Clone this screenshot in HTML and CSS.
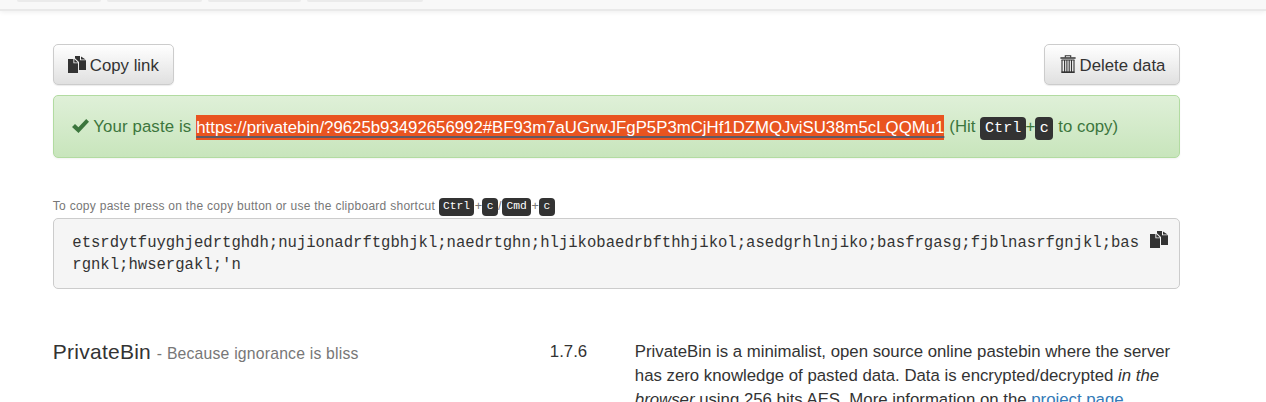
FILE: index.html
```html
<!DOCTYPE html>
<html lang="en">
<head>
<meta charset="utf-8">
<title>PrivateBin</title>
<link rel="stylesheet" href="styles.css">
</head>
<body>
<svg class="defs" width="0" height="0" aria-hidden="true">
  <symbol id="copy" viewBox="0 0 18 17">
    <path d="M0 3h5.4v4.2H10V17H0zM6.3 3 10 6.4H6.3z"/>
    <path d="M7 0h5v4.3h6V14h-7V6L7 2.2zM13 .4 17.6 3.6H13z"/>
  </symbol>
</svg>
<nav class="navbar"><span class="tab tab1"></span><span class="tab tab2"></span><span class="tab tab3"></span><span class="tab tab4"></span></nav>
<main class="container">
  <div class="actions">
    <button class="btn"><svg class="icon-copy"><use href="#copy"/></svg><span class="label">Copy link</span></button>
    <button class="btn"><svg class="icon-trash" viewBox="0 0 16 18"><path fill="none" stroke="currentColor" stroke-width="1.1" d="M5.3 2.5V.7h5.4v1.8M2 5v12.2h12V5M4.6 5v12M6.9 5v12M9.2 5v12M11.5 5v12"/><path d="M.4 2.3h15.2v1.5H.4zM1.5 4.5h13v1h-13zM1.5 16.4h13V18h-13z"/></svg><span class="label">Delete data</span></button>
  </div>
  <div class="alert">
    <svg class="icon-ok" viewBox="0 0 17 14"><path d="M0 8 3 5l3.4 3.3L14.2 0 17 2.8 6.5 14z"/></svg>
    <span class="t-your">Your paste is</span>
    <a class="url" href="#">https://privatebin/?9625b93492656992#BF93m7aUGrwJFgP5P3mCjHf1DZMQJviSU38m5cLQQMu1</a>
    <span class="t-hit">(Hit</span><kbd>Ctrl</kbd><span class="plus">+</span><kbd>c</kbd><span class="t-tocopy">to copy)</span>
  </div>
  <div class="hint"><span class="t-hint">To copy paste press on the copy button or use the clipboard shortcut</span><kbd>Ctrl</kbd><span class="plus">+</span><kbd>c</kbd><span class="slash">/</span><kbd>Cmd</kbd><span class="plus">+</span><kbd>c</kbd></div>
  <div class="paste"><pre>etsrdytfuyghjedrtghdh;nujionadrftgbhjkl;naedrtghn;hljikobaedrbfthhjikol;asedgrhlnjiko;basfrgasg;fjblnasrfgnjkl;bas
rgnkl;hwsergakl;'n</pre><svg class="icon-copy"><use href="#copy"/></svg></div>
  <footer class="footer">
    <h4><span class="t-name">PrivateBin</span> <small>- Because ignorance is bliss</small></h4>
    <p class="version">1.7.6</p>
    <p class="about">PrivateBin is a minimalist, open source online pastebin where the server<br>has zero knowledge of pasted data. Data is encrypted/decrypted <i>in the</i><br><i>browser</i> using 256 bits AES. More information on the <a href="#">project page</a>.</p>
  </footer>
</main>
</body>
</html>
```
FILE: styles.css
```css
* { box-sizing: border-box; }
html { overflow: hidden; }
body { margin: 0; height: 402px; overflow: hidden; background: #fff; color: #333; font: 16.8px/24px "Liberation Sans", Arial, sans-serif; white-space: nowrap; }
svg { fill: currentColor; display: block; flex: none; }
.defs { position: absolute; }
.navbar { height: 11px; display: flex; gap: 6px; padding-left: 17px; background: #f8f8f8; border-bottom: 2px solid #e9e9e9; box-shadow: 0 1px 5px rgba(0,0,0,.075); }
.tab { height: 2px; background: #ebebeb; border-radius: 0 0 4px 4px; }
.tab1 { width: 84px; } .tab2 { width: 95px; } .tab3 { width: 93px; } .tab4 { width: 116px; }
.container { width: 1127.6px; margin: 33px 0 0 52.8px; }
.actions { display: flex; justify-content: space-between; }
.btn { height: 41px; display: flex; align-items: center; padding: 0 14px; color: #333; font: inherit; border: 1px solid #ccc; border-radius: 5px; background: linear-gradient(#fff, #e0e0e0); box-shadow: 0 1px 1px rgba(0,0,0,.08), inset 0 1px 0 rgba(255,255,255,.15); }
.label { padding-top: 2px; }
.icon-copy { width: 18px; height: 17px; margin-right: 4px; }
.icon-trash { width: 16px; height: 18px; margin: 0 4px 2px 1px; }
.alert { height: 63px; margin-top: 10px; display: flex; align-items: center; padding: 1px 0 0 18.5px; color: #3c763d; border: 1px solid #b2dba1; border-radius: 5px; background: linear-gradient(#dff0d8, #c8e5bc); box-shadow: 0 1px 2px rgba(0,0,0,.05); }
.icon-ok { width: 17px; height: 14px; margin: 0 4px 2px 0; }
.t-your { letter-spacing: .12px; }
.url { margin: 0 5px; height: 25px; line-height: 26px; background: #e95420; color: #fff; text-decoration: underline; text-decoration-color: #5f5a66; text-decoration-thickness: 2px; text-underline-offset: 3px; text-decoration-skip-ink: none; }
kbd { display: block; color: #fff; background: #333; border-radius: 4px; font: 15.1px/20px "Liberation Mono", monospace; }
.alert kbd { height: 23px; padding: 1px 4.6px; margin-top: 2px; }
.alert .plus { margin: 0 -.3px; }
.t-hit { margin-right: 5px; }
.t-tocopy { margin-left: 5px; }
.hint { height: 24px; margin-top: 36px; display: flex; align-items: center; color: #777; font-size: 12.6px; }
.hint kbd { height: 18px; padding: 1px 4.4px; font-size: 11.3px; line-height: 15px; margin-top: 2px; }
.t-hint { margin-right: 3.5px; font-size: 12px; letter-spacing: .275px; }
.hint .plus { width: 8px; text-align: center; }
.slash { width: 4px; }
.paste { height: 71px; display: flex; justify-content: space-between; padding: 13px 7px 0 18.5px; border: 1px solid #ccc; border-radius: 5px; background: #f5f5f5; }
.paste .icon-copy { margin-top: -1px; }
pre { margin: 0; font: 15.6px/22px "Liberation Mono", monospace; }
.footer { display: grid; grid-template-columns: 497px 85px auto; margin-top: 51px; }
.footer p, .footer h4 { margin: 0; font-weight: normal; }
h4 { font-size: 21px; }
.t-name { letter-spacing: .25px; }
small { font-size: 15.75px; letter-spacing: .2px; color: #777; }
a { color: #337ab7; text-decoration: none; }
```
